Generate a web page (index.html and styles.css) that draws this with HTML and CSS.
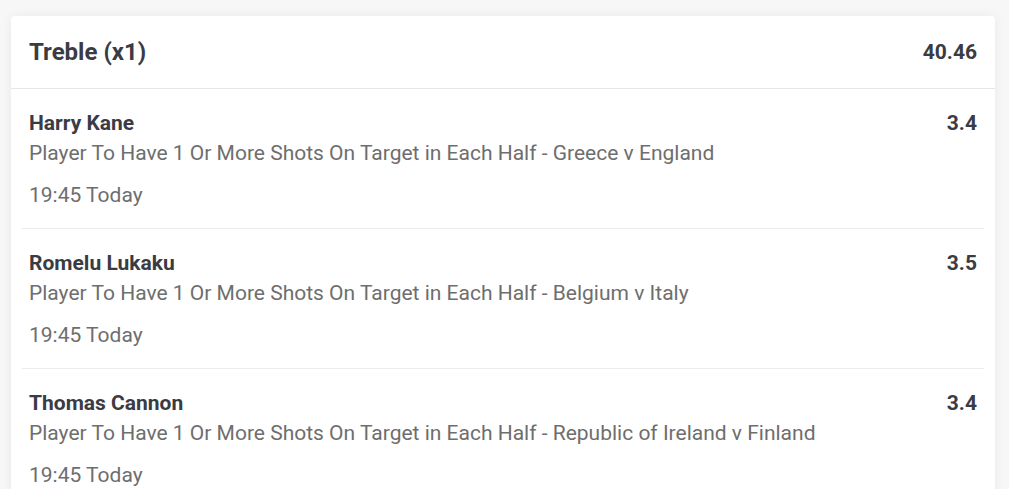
FILE: index.html
```html
<!DOCTYPE html>
<html>
<head>
<meta charset="utf-8">
<link rel="stylesheet" href="styles.css">
</head>
<body>
<div class="card">
  <div class="header">
    <span class="title">Treble (x1)</span>
    <span class="total">40.46</span>
  </div>
  <div class="item">
    <div class="row">
      <span class="name">Harry Kane</span>
      <span class="odds">3.4</span>
    </div>
    <div class="desc">Player To Have 1 Or More Shots On Target in Each Half - Greece v England</div>
    <div class="time">19:45 Today</div>
  </div>
  <div class="item">
    <div class="row">
      <span class="name">Romelu Lukaku</span>
      <span class="odds">3.5</span>
    </div>
    <div class="desc">Player To Have 1 Or More Shots On Target in Each Half - Belgium v Italy</div>
    <div class="time">19:45 Today</div>
  </div>
  <div class="item">
    <div class="row">
      <span class="name">Thomas Cannon</span>
      <span class="odds">3.4</span>
    </div>
    <div class="desc">Player To Have 1 Or More Shots On Target in Each Half - Republic of Ireland v Finland</div>
    <div class="time">19:45 Today</div>
  </div>
</div>
</body>
</html>
```
FILE: styles.css
```css
html, body {
  margin: 0;
  padding: 0;
}
body {
  background: #f7f7f7;
  font-family: Roboto, "Liberation Sans", sans-serif;
  padding: 16px 14px 0 11px;
  height: 489px;
  box-sizing: border-box;
  overflow: hidden;
}
.card {
  background: #fff;
  border-radius: 4px 4px 0 0;
  box-shadow: 0 0 12px rgba(0,0,0,0.06);
  width: 984px;
}
.header {
  display: flex;
  justify-content: space-between;
  align-items: center;
  height: 72px;
  padding: 0 18px;
  border-bottom: 1px solid #e6e6e6;
  color: #3b3b43;
  font-weight: 700;
}
.title {
  font-size: 24px;
  line-height: 72px;
}
.total {
  font-size: 21px;
  line-height: 72px;
}
.item {
  margin: 0 11px;
  padding: 19px 7px 18px;
  border-bottom: 1px solid #ececec;
}
.row {
  display: flex;
  justify-content: space-between;
  line-height: 30px;
}
.name, .odds {
  font-size: 21px;
  font-weight: 700;
  color: #3b3b43;
}
.desc, .time {
  font-size: 21px;
  line-height: 30px;
  color: #6e6e6e;
}
.time {
  margin-top: 12px;
}
```
